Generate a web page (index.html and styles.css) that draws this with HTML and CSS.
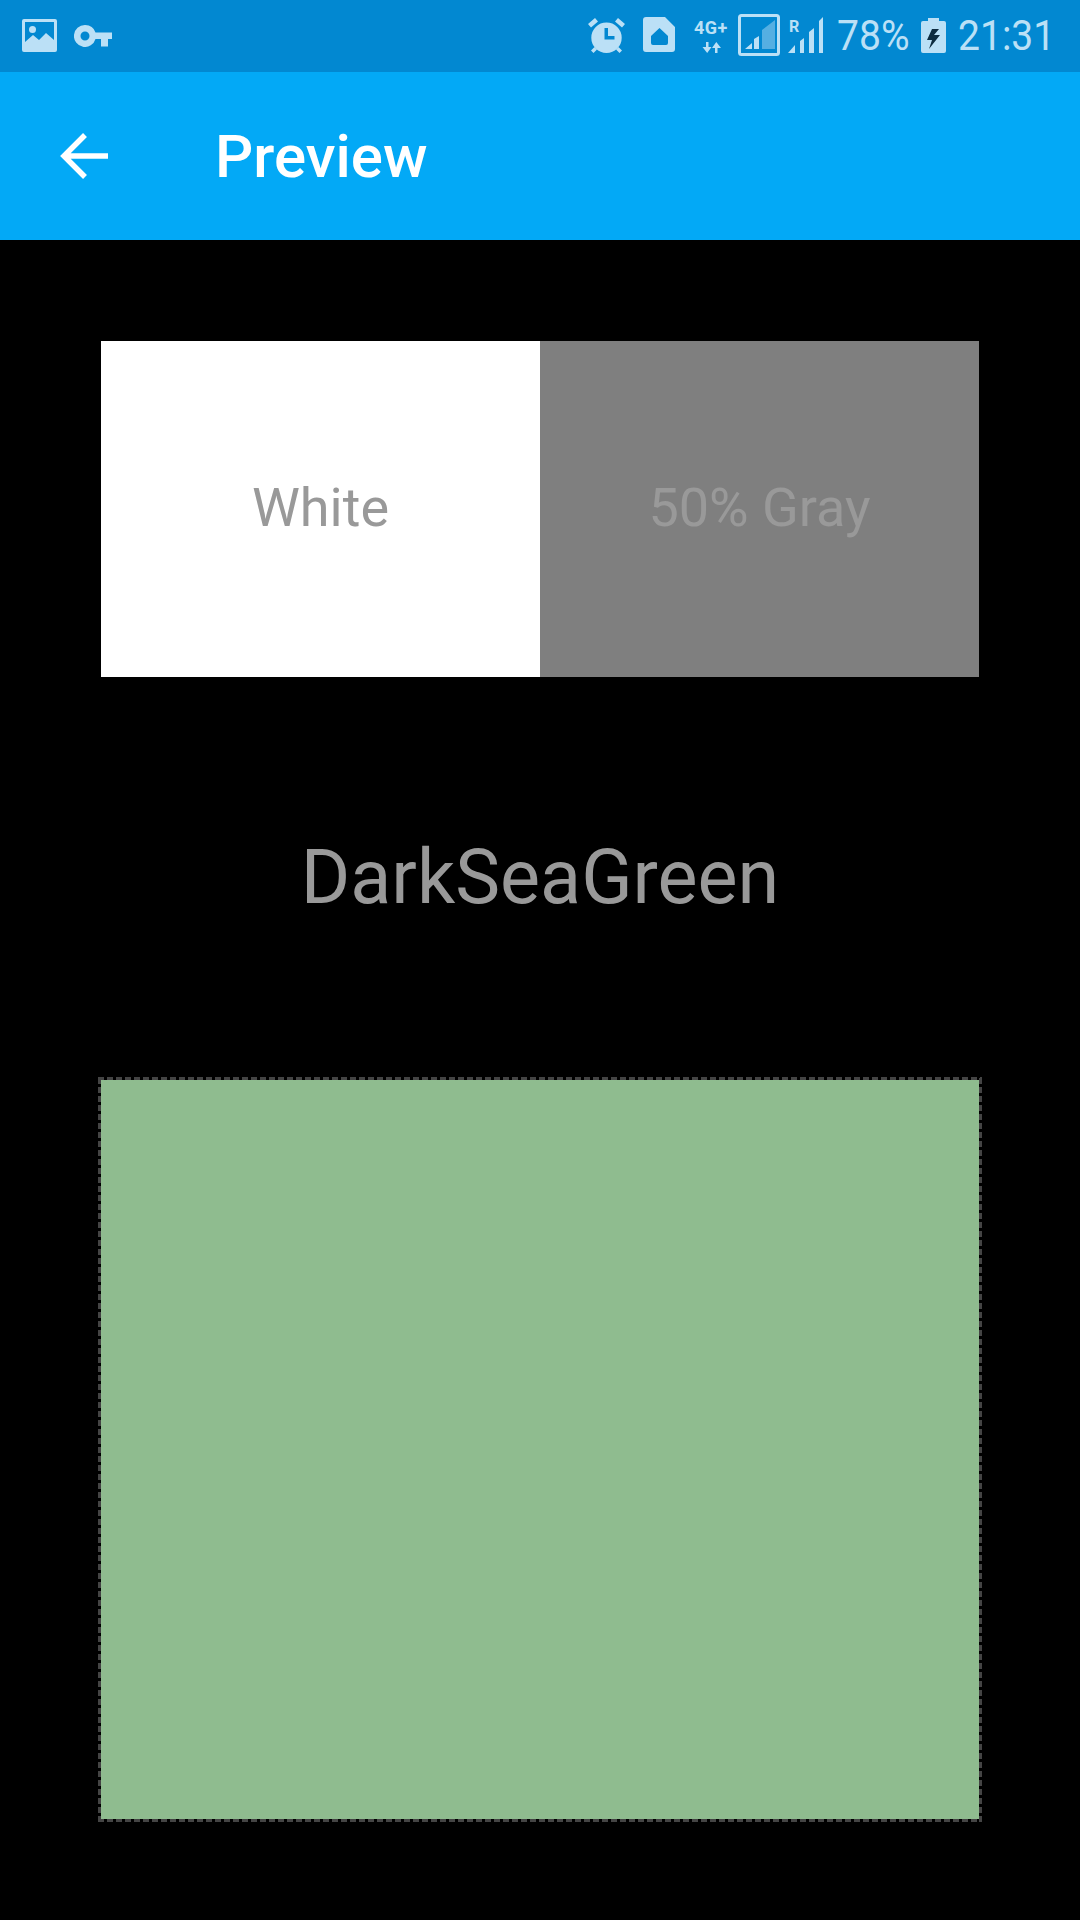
FILE: index.html
```html
<!DOCTYPE html>
<html lang="en">
<head>
<meta charset="utf-8">
<title>Preview</title>
<link rel="stylesheet" href="styles.css">
</head>
<body>
<div class="phone">
  <header class="status">
    <div class="status-left">
      <svg class="i-image" viewBox="0 0 35 33"><path fill-rule="evenodd" d="M2 0h31a2 2 0 0 1 2 2v29a2 2 0 0 1-2 2H2a2 2 0 0 1-2-2V2a2 2 0 0 1 2-2zM3 3v20l8-7 6 5 7-7 8 7V3z"/><circle cx="10.500" cy="10.500" r="3.500"/></svg>
      <svg class="i-key" viewBox="0 0 38 22"><path fill-rule="evenodd" d="M11 0a11 11 0 0 1 10.500 7.500H38V14h-4v7.500h-7V14h-5.500A11 11 0 1 1 11 0zm0 6.500a4.500 4.500 0 1 0 0 9 4.500 4.500 0 0 0 0-9z"/></svg>
    </div>
    <div class="status-right">
      <svg class="i-alarm" viewBox="0 0 37 35"><path fill-rule="evenodd" d="M18.500 4.500a15.200 15.200 0 1 1 0 30.400 15.200 15.200 0 0 1 0-30.400zM16.500 10v11.500h10v-3.500h-6.500v-8z"/><path d="M0 6 7 0l3 3.500-7 6zM37 6 30 0l-3 3.500 7 6zM3 32.500l3.500-3.500 2.500 2.500-3.500 3.500zM34 32.500 30.500 29 28 31.500l3.500 3.500z"/></svg>
      <svg class="i-sim" viewBox="0 0 32 35"><path fill-rule="evenodd" d="M3 0h19l10 10v22a3 3 0 0 1-3 3H3a3 3 0 0 1-3-3V3a3 3 0 0 1 3-3zM16.500 11 8 19v7a2 2 0 0 0 2 2h13a2 2 0 0 0 2-2v-7z"/></svg>
      <svg class="i-net" viewBox="0 0 37 31"><text class="net-text" x="0" y="12">4G+</text><path d="M12 20h2.500v5h3l-4.300 6-4.700-6h3.500zM23.500 31H21v-5h-3l4.300-6 4.700 6h-3.500z"/></svg>
      <svg class="i-box" viewBox="0 0 42 42"><rect class="box-line" x="1.500" y="1.500" width="39" height="39" rx="2"/><path d="M7 35l7-6v6zM16 35V25l5-3v13z"/><path class="dim" d="M24 35V16L37 6v29z"/></svg>
      <svg class="i-signal" viewBox="0 0 36 36"><text class="r-text" x="1" y="15">R</text><path d="M0 36l7-8v8zM12 36V24l4-3v15zM21 36V15l5-4v25zM31 36V4l4-4v36z"/></svg>
      <span class="reading pct">78%</span>
      <svg class="i-batt" viewBox="0 0 25 35"><path d="M7 0h11v3h5a2 2 0 0 1 2 2v28a2 2 0 0 1-2 2H2a2 2 0 0 1-2-2V5a2 2 0 0 1 2-2h5z"/><rect class="dim" x="3" y="7" width="19" height="5"/><path class="bolt" d="M18 11H11L6 22h5l-3 9 11-14h-6z"/></svg>
      <span class="reading clock">21:31</span>
    </div>
  </header>
  <nav class="appbar">
    <svg class="i-back" viewBox="0 0 48 46"><path d="M48 23H4M25 2 4 23l21 21"/></svg>
    <h1 class="title">Preview</h1>
  </nav>
  <main class="content">
    <div class="swatches">
      <div class="swatch swatch-white">White</div>
      <div class="swatch swatch-gray">50% Gray</div>
    </div>
    <div class="color-name">DarkSeaGreen</div>
    <div class="preview"><div class="preview-fill"></div></div>
  </main>
</div>
</body>
</html>
```
FILE: styles.css
```css
* { box-sizing: border-box; }
html, body { margin: 0; padding: 0; background: #000; }
body { font-family: Roboto, "Liberation Sans", sans-serif; }
.phone { width: 1080px; height: 1920px; display: flex; flex-direction: column; overflow: hidden; }

.status { height: 72px; background: #0288d1; display: flex; justify-content: space-between; align-items: flex-start; fill: #bbe0f6; color: #bbe0f6; }
.status svg { display: block; flex: none; }
.status-left { display: flex; align-items: flex-start; padding: 19px 0 0 22px; gap: 17px; }
.status-right { display: flex; align-items: flex-start; padding-right: 30px; }
.i-image { width: 35px; height: 33px; }
.i-key { width: 38px; height: 22px; margin-top: 6px; }
.i-alarm { width: 37px; height: 35px; margin: 18px 18px 0 0; }
.i-sim { width: 32px; height: 35px; margin: 17px 19px 0 0; }
.i-net { width: 37px; height: 31px; margin: 22px 7px 0 0; overflow: visible; }
.net-text { font: 700 18px Roboto, sans-serif; letter-spacing: .5px; }
.i-box { width: 42px; height: 42px; margin: 14px 8px 0 0; }
.box-line { fill: none; stroke: #bbe0f6; stroke-width: 3; }
.dim { opacity: .45; }
.i-signal { width: 36px; height: 36px; margin: 17px 13px 0 0; overflow: visible; }
.r-text { font: 700 16px Roboto, sans-serif; }
.i-batt { width: 25px; height: 35px; margin: 18px 12px 0 0; }
.bolt { fill: #0d2c40; }
.reading { display: block; font-size: 42px; line-height: 72px; height: 72px; white-space: nowrap; transform: scaleX(.93); transform-origin: 0 50%; }
.pct { width: 70px; margin-right: 14px; }
.clock { width: 92px; }

.appbar { height: 168px; background: #03a9f6; display: flex; align-items: center; padding-left: 60px; }
.i-back { width: 48px; height: 46px; flex: none; fill: none; stroke: #fff; stroke-width: 5.5; }
.title { margin: 2px 0 0 107px; font-size: 60px; font-weight: 500; line-height: 1; color: #fff; }

.content { flex: 1; display: flex; flex-direction: column; padding: 101px 98px 98px; }
.swatches { height: 336px; margin: 0 3px; display: flex; flex: none; }
.swatch { flex: 1; display: flex; align-items: center; justify-content: center; padding-bottom: 3px; font-size: 54px; color: #999; }
.swatch-white { background: #fff; }
.swatch-gray { background: #7f7f7f; }
.color-name { flex: 1; display: flex; align-items: center; justify-content: center; font-size: 75.5px; color: #999; }
.preview { height: 745px; flex: none; padding: 3px;
  background:
    repeating-linear-gradient(90deg, #444 0 6px, transparent 6px 9px) top / 100% 3px no-repeat,
    repeating-linear-gradient(90deg, #444 0 6px, transparent 6px 9px) bottom / 100% 3px no-repeat,
    repeating-linear-gradient(0deg, #444 0 6px, transparent 6px 9px) left / 3px 100% no-repeat,
    repeating-linear-gradient(0deg, #444 0 6px, transparent 6px 9px) right / 3px 100% no-repeat;
}
.preview-fill { height: 100%; background: #8fbc8f; }
```
